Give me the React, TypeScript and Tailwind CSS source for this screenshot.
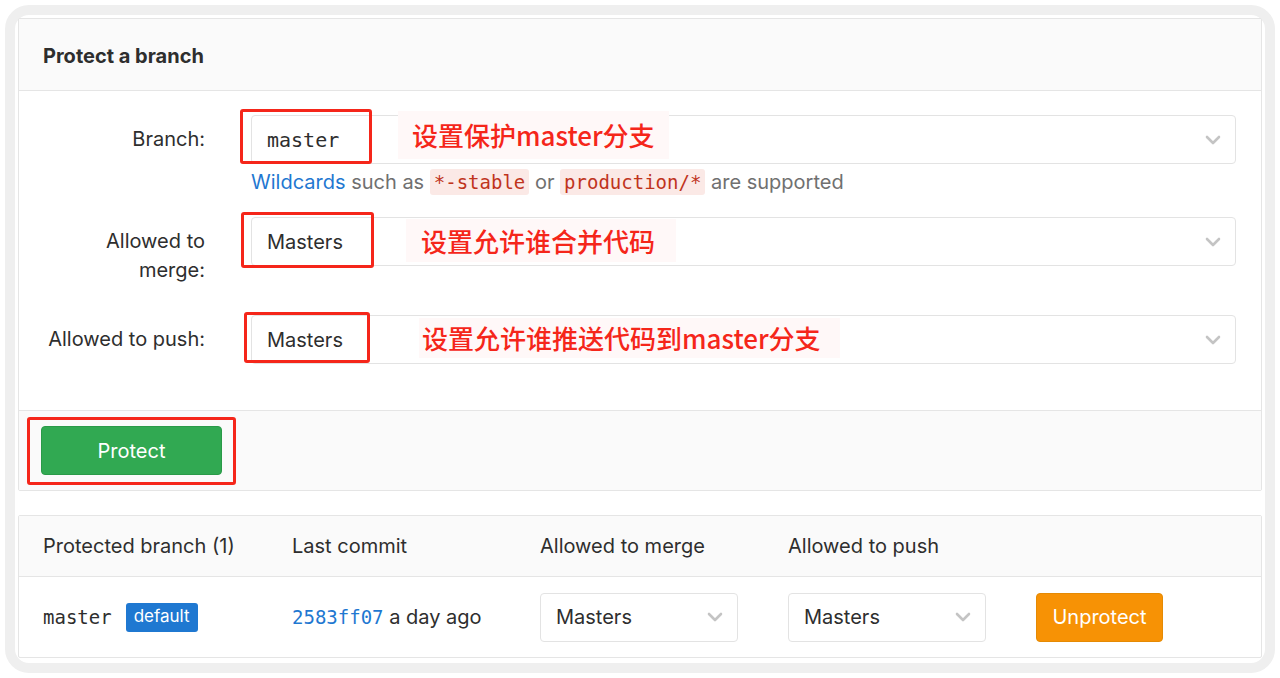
import React from "react";

const sans = "font-['Inter','Liberation_Sans',sans-serif]";
const mono = "font-['DejaVu_Sans_Mono','Liberation_Mono',monospace]";
const cjk = "font-['Noto_Sans_CJK_SC','Noto_Sans',sans-serif]";

function Chevron() {
  return (
    <svg width="16" height="10" viewBox="0 0 16 10" fill="none">
      <path d="M2 2l6 6 6-6" stroke="#c4c4c4" strokeWidth="2.6" strokeLinecap="round" strokeLinejoin="round" />
    </svg>
  );
}

// red annotation frame laid over the field
function Mark({ className }: { className: string }) {
  return <div className={`pointer-events-none absolute rounded-[3px] border-[3px] border-[#f5261a] ${className}`} />;
}

function Note({ text, className, textClass }: { text: string; className: string; textClass: string }) {
  return (
    <div className={`pointer-events-none absolute flex items-center bg-[#fff8f8] ${className}`}>
      <span className={`${cjk} text-[26px] font-medium leading-none text-[#f5261a] ${textClass}`}>{text}</span>
    </div>
  );
}

function Field({ children }: { children: React.ReactNode }) {
  return (
    <div className="flex h-[49px] items-center justify-between rounded-[4px] border border-[#e3e3e3] bg-white pl-[15px] pr-[14px]">
      {children}
      <Chevron />
    </div>
  );
}

export default function App() {
  return (
    <div className={`h-[678px] w-[1280px] bg-white p-[5px] text-[#2e2e2e] ${sans}`}>
      <div className="flex h-full flex-col rounded-[24px] border-[10px] border-[#efefef] bg-white p-[3px]">
        {/* Protect a branch */}
        <section className="rounded-[2px] border border-[#e5e5e5]">
          <div className="flex h-[72px] items-center border-b border-[#e5e5e5] bg-[#fafafa] pl-[24px] pt-[3px]">
            <h3 className="text-[20px] font-bold">Protect a branch</h3>
          </div>

          <div className="pb-[46px] pr-[25px] pt-[24px]">
            <div className="flex">
              <label className="w-[186px] shrink-0 pt-[10px] text-right text-[20px] leading-[29px]">Branch:</label>
              <div className="ml-[46px] flex-1">
                <div className="relative">
                  <Field>
                    <span className={`${mono} text-[20px]`}>master</span>
                  </Field>
                  <Mark className="-left-[11px] -top-[6px] h-[55px] w-[132px]" />
                  <Note text="设置保护master分支" className="left-[147px] -top-[4px] h-[48px] w-[271px]" textClass="pl-[14px]" />
                </div>
                <p className="mt-[5px] text-[20px] leading-[26px] text-[#707070]">
                  <span className="text-[#1f78d1]">Wildcards</span> such as{" "}
                  <code className={`${mono} rounded-[3px] bg-[#fbe9e6] px-[4px] py-[2px] text-[19px] text-[#c0341d]`}>*-stable</code> or{" "}
                  <code className={`${mono} rounded-[3px] bg-[#fbe9e6] px-[4px] py-[2px] text-[19px] text-[#c0341d]`}>production/*</code> are supported
                </p>
              </div>
            </div>

            <div className="mt-[22px] flex">
              <label className="w-[186px] shrink-0 pt-[10px] text-right text-[20px] leading-[29px]">
                Allowed to
                <br />
                merge:
              </label>
              <div className="relative ml-[46px] flex-1">
                <Field>
                  <span className="text-[20px]">Masters</span>
                </Field>
                <Mark className="-left-[10px] -top-[5px] h-[56px] w-[133px]" />
                <Note text="设置允许谁合并代码" className="left-[155px] top-[2px] h-[43px] w-[270px]" textClass="pl-[15px]" />
              </div>
            </div>

            <div className="mt-[30px] flex">
              <label className="w-[186px] shrink-0 pt-[10px] text-right text-[20px] leading-[29px]">Allowed to push:</label>
              <div className="relative ml-[46px] flex-1">
                <Field>
                  <span className="text-[20px]">Masters</span>
                </Field>
                <Mark className="-left-[7px] -top-[3px] h-[51px] w-[126px]" />
                <Note text="设置允许谁推送代码到master分支" className="left-[168px] top-[3px] h-[40px] w-[421px]" textClass="pl-[3px]" />
              </div>
            </div>
          </div>

          <div className="border-t border-[#e5e5e5] bg-[#fafafa] py-[15px] pl-[22px]">
            <div className="relative w-[181px]">
              <button className="h-[49px] w-[181px] rounded-[4px] border border-[#2a9a48] bg-[#31a952] text-[20px] text-white">
                Protect
              </button>
              <Mark className="-left-[14px] -top-[9px] h-[68px] w-[209px]" />
            </div>
          </div>
        </section>

        {/* Protected branches table */}
        <section className="mt-[24px] rounded-[2px] border border-[#e5e5e5]">
          <div className="flex h-[61px] items-center border-b border-[#e5e5e5] bg-[#fafafa] pl-[24px] text-[20px]">
            <div className="w-[249px]">Protected branch (1)</div>
            <div className="w-[248px]">Last commit</div>
            <div className="w-[248px]">Allowed to merge</div>
            <div className="w-[248px]">Allowed to push</div>
          </div>
          <div className="flex h-[80px] items-center pl-[24px]">
            <div className="flex w-[249px] items-center gap-[14px]">
              <span className={`${mono} text-[19px]`}>master</span>
              <span className="flex h-[29px] items-center rounded-[3px] bg-[#1f78d1] px-[8px] text-[17px] text-white">default</span>
            </div>
            <div className="w-[248px] text-[20px]">
              <span className={`${mono} text-[19px] text-[#1f78d1]`}>2583ff07</span> a day ago
            </div>
            <div className="w-[248px]">
              <div className="flex h-[49px] w-[198px] items-center justify-between rounded-[4px] border border-[#e3e3e3] pl-[15px] pr-[14px]">
                <span className="text-[20px]">Masters</span>
                <Chevron />
              </div>
            </div>
            <div className="w-[248px]">
              <div className="flex h-[49px] w-[198px] items-center justify-between rounded-[4px] border border-[#e3e3e3] pl-[15px] pr-[14px]">
                <span className="text-[20px]">Masters</span>
                <Chevron />
              </div>
            </div>
            <button className="h-[49px] w-[127px] rounded-[4px] border border-[#e58a04] bg-[#f79205] text-[20px] text-white">
              Unprotect
            </button>
          </div>
        </section>
      </div>
    </div>
  );
}
